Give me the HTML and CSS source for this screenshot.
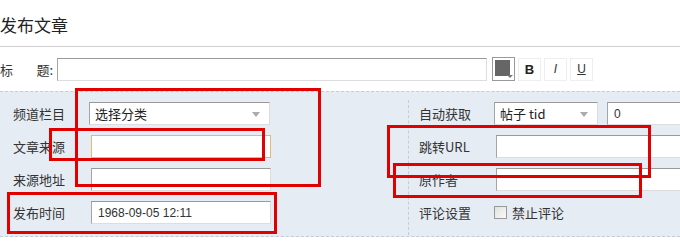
FILE: index.html
```html
<!DOCTYPE html>
<html lang="zh-CN">
<head>
    <meta charset="UTF-8">
    <title>发布文章</title>
    <link rel="stylesheet" href="styles.css">
</head>
<body>
    <div class="page">
        <h2 class="title">发布文章</h2>

        <div class="subject-row">
            <span class="subject-label"><span>标</span><span>题:</span></span>
            <input class="text subject-input" type="text">
            <span class="color-btn"><span class="swatch"></span><span class="caret"></span></span>
            <span class="fmt-btn bold">B</span>
            <span class="fmt-btn italic">I</span>
            <span class="fmt-btn underline">U</span>
        </div>

        <div class="panel">
            <div class="col col-left">
                <div class="row">
                    <label>频道栏目</label>
                    <div class="select wide">选择分类<span class="arrow"></span></div>
                </div>
                <div class="row">
                    <label>文章来源</label>
                    <input class="text wide focus" type="text">
                </div>
                <div class="row">
                    <label>来源地址</label>
                    <input class="text wide" type="text">
                </div>
                <div class="row">
                    <label>发布时间</label>
                    <input class="text wide" type="text" value="1968-09-05 12:11">
                </div>
            </div>
            <div class="col col-right">
                <div class="row">
                    <label>自动获取</label>
                    <div class="select small">帖子 tid<span class="arrow"></span></div>
                    <input class="text tid" type="text" value="0">
                </div>
                <div class="row">
                    <label>跳转URL</label>
                    <input class="text long" type="text">
                </div>
                <div class="row">
                    <label>原作者</label>
                    <input class="text long" type="text">
                </div>
                <div class="row">
                    <label>评论设置</label>
                    <span class="check"></span>
                    <span class="check-text">禁止评论</span>
                </div>
            </div>
        </div>

        <!-- red markers drawn over the form -->
        <div class="mark m1"></div>
        <div class="mark m2"></div>
        <div class="mark m3"></div>
        <div class="mark m4"></div>
        <div class="mark m5"></div>
    </div>
</body>
</html>
```

FILE: styles.css
```css
body {
    margin: 0;
    padding: 0;
    background: #fff;
    font-family: "Noto Sans CJK SC", "Liberation Sans", sans-serif;
    font-size: 12px;
    color: #333;
    overflow: hidden;
}

.page {
    position: relative;
    width: 680px;
    height: 251px;
    overflow: hidden;
}

.title {
    margin: 0;
    height: 46px;
    line-height: 50px;
    font-size: 17px;
    font-weight: normal;
    color: #222;
    border-bottom: 1px solid #cfcfcf;
}

.subject-row {
    display: flex;
    align-items: center;
    height: 44px;
}

.subject-label {
    display: flex;
    justify-content: space-between;
    width: 53px;
    margin-right: 4px;
    font-size: 13px;
}

.text {
    box-sizing: border-box;
    flex-shrink: 0;
    height: 23px;
    margin: 0;
    padding: 0 6px;
    border: 1px solid #ddd;
    border-top-color: #999;
    border-left-color: #a5a5a5;
    background: #fff;
    font-family: "Liberation Sans", "Noto Sans CJK SC", sans-serif;
    font-size: 12px;
    color: #333;
    outline: none;
}

.subject-input {
    width: 430px;
    margin-right: 5px;
}

.color-btn {
    position: relative;
    box-sizing: border-box;
    width: 23px;
    height: 24px;
    border: 1px solid #999;
    background: #fff;
    margin-right: 3px;
}

.color-btn .swatch {
    position: absolute;
    left: 2px;
    top: 2px;
    width: 15px;
    height: 16px;
    background: #666;
}

.color-btn .caret {
    position: absolute;
    right: 1px;
    bottom: 2px;
    border-left: 3px solid transparent;
    border-right: 3px solid transparent;
    border-top: 3px solid #777;
}

.fmt-btn {
    box-sizing: border-box;
    width: 23px;
    height: 23px;
    margin-right: 3px;
    border: 1px solid #eee;
    text-align: center;
    line-height: 21px;
    font-family: "Liberation Sans", sans-serif;
    font-size: 12px;
    color: #333;
}

.fmt-btn.bold {
    font-weight: bold;
    font-size: 13px;
    color: #222;
}

.fmt-btn.italic {
    font-style: italic;
}

.fmt-btn.underline {
    text-decoration: underline;
}

.panel {
    display: flex;
    height: 144px;
    background: #e6ecf3;
    border-top: 1px dashed #c5ccd4;
    border-bottom: 1px dashed #c5ccd4;
}

.col {
    display: flex;
    flex-direction: column;
    gap: 10px;
}

.col-left {
    flex-shrink: 0;
    width: 395px;
    padding: 10px 0 0 13px;
}

.col-right {
    flex: 1;
    min-width: 0;
    margin-top: 8px;
    margin-bottom: 1px;
    padding: 2px 0 0 10px;
    border-left: 1px dashed #c5ccd4;
}

.row {
    display: flex;
    align-items: center;
    height: 23px;
}

.row label {
    flex-shrink: 0;
    width: 76px;
    font-size: 13px;
    color: #333;
}

.col-right .row label {
    width: 75px;
}

.select {
    position: relative;
    flex-shrink: 0;
    box-sizing: border-box;
    height: 23px;
    padding-left: 5px;
    line-height: 21px;
    border: 1px solid #ddd;
    border-top-color: #999;
    border-left-color: #a5a5a5;
    background: #fff;
    font-size: 13px;
    color: #222;
}

.select .arrow {
    position: absolute;
    right: 9px;
    top: 9px;
    border-left: 4px solid transparent;
    border-right: 4px solid transparent;
    border-top: 5px solid #aaa;
}

.wide {
    width: 181px;
}

.col-left .text.wide {
    margin-left: 2px;
    width: 180px;
}

.text.focus {
    border-color: #e8b86a;
}

.small {
    width: 104px;
}

.tid {
    width: 80px;
    margin-left: 9px;
}

.long {
    width: 200px;
    margin-left: 2px;
}

.check {
    flex-shrink: 0;
    box-sizing: border-box;
    width: 13px;
    height: 13px;
    border: 1px solid #999;
    background: linear-gradient(135deg, #e0e0e0, #fafafa);
    margin-right: 5px;
}

.check-text {
    font-size: 13px;
}

.mark {
    position: absolute;
    box-sizing: border-box;
    border: 3px solid #e10000;
}

.m1 { left: 75px; top: 88px; width: 246px; height: 99px; }
.m2 { left: 49px; top: 128px; width: 216px; height: 33px; }
.m3 { left: 7px; top: 192px; width: 270px; height: 42px; }
.m4 { left: 387px; top: 125px; width: 264px; height: 53px; }
.m5 { left: 393px; top: 163px; width: 249px; height: 35px; }
```
